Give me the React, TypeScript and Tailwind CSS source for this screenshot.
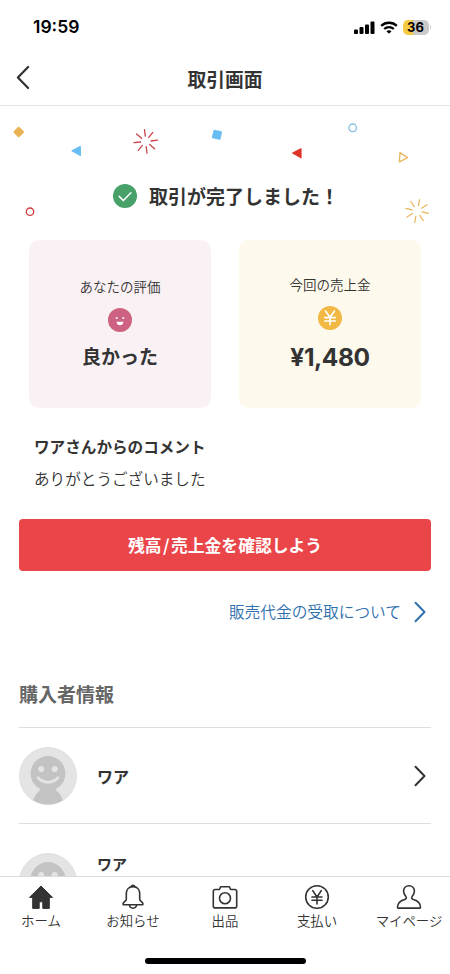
import type { ReactNode } from "react";

const NAV_ITEMS = [
  { id: "home", label: "ホーム", icon: <HomeIcon /> },
  { id: "news", label: "お知らせ", icon: <BellIcon /> },
  { id: "sell", label: "出品", icon: <CameraIcon /> },
  { id: "pay", label: "支払い", icon: <YenIcon /> },
  { id: "mypage", label: "マイページ", icon: <PersonIcon /> },
];

function HomeIcon() {
  return (
    <svg viewBox="0 0 28 28" className="size-7" fill="#333" stroke="#333" strokeWidth="1" strokeLinejoin="round" aria-hidden>
      <path d="M14 3 2.500 14.400h3.200v11h6.500v-6.600h3.600v6.600h6.500v-11h3.200z" />
    </svg>
  );
}

function BellIcon() {
  return (
    <svg viewBox="0 0 28 28" className="size-7" fill="none" stroke="#333" strokeWidth="1.600" strokeLinejoin="round" aria-hidden>
      <path d="M14 3.600c-4.400 0-6.700 3.200-6.700 7.200v5.400c0 1.900-3.300 3-3.300 4.800 0 .5.300.8.800.8h18.400c.5 0 .8-.3.8-.8 0-1.800-3.300-2.900-3.300-4.800v-5.400c0-4-2.300-7.200-6.700-7.200z" />
      <path d="M10.400 21.800c.2 2.200 1.600 3.400 3.600 3.400s3.400-1.200 3.600-3.400" />
      <path d="M12.500 3.400a1.500 1 0 0 1 3 0" fill="#333" />
    </svg>
  );
}

function CameraIcon() {
  return (
    <svg viewBox="0 0 28 28" className="size-7" fill="none" stroke="#333" strokeWidth="1.600" strokeLinejoin="round" aria-hidden>
      <path d="M4.200 6.500h4.200l1.200-2.700h8.800l1.200 2.700h4.200c1.200 0 1.900.8 1.900 1.900v14.500c0 1.200-.8 2-1.900 2H4.200c-1.200 0-1.900-.8-1.900-2V8.400c0-1.100.8-1.900 1.900-1.900z" />
      <circle cx="14" cy="15.300" r="5.500" />
    </svg>
  );
}

function YenIcon() {
  return (
    <svg viewBox="0 0 28 28" className="size-7" fill="none" stroke="#333" strokeWidth="1.600" strokeLinecap="round" aria-hidden>
      <circle cx="14" cy="14" r="11.300" />
      <path d="m9.700 7.600 4.300 6.400 4.300-6.400M14 14v7M9 14h10M9 17.200h10" />
    </svg>
  );
}

function PersonIcon() {
  return (
    <svg viewBox="0 0 28 28" className="size-7" fill="none" stroke="#333" strokeWidth="1.600" strokeLinejoin="round" aria-hidden>
      <path d="M14 2.800c-3.300 0-5.400 2.300-5.400 5.500 0 2.500 1.300 3.900 2.300 5.300.9 1.400.3 2.400-1.300 2.900-4.500 1.300-7.100 3.700-7.100 7.800 0 .5.300.8.800.8h21.400c.5 0 .8-.3.800-.8 0-4.100-2.600-6.500-7.100-7.800-1.600-.5-2.200-1.500-1.300-2.900 1-1.400 2.300-2.800 2.300-5.300 0-3.200-2.100-5.500-5.400-5.500z" />
    </svg>
  );
}

function Chevron({ className }: { className: string }) {
  return (
    <svg
      viewBox="0 0 12 22"
      className={className}
      fill="none"
      stroke="currentColor"
      strokeWidth="2"
      strokeLinecap="round"
      strokeLinejoin="round"
      aria-hidden
    >
      <path d="m1.500 1.800 9 9.200-9 9.200" />
    </svg>
  );
}

function Confetti() {
  return (
    <svg viewBox="0 0 450 134" className="absolute inset-x-0 top-0 h-[134px] w-full" fill="none" strokeLinecap="round" strokeLinejoin="round" aria-hidden>
      <rect x="14.700" y="22" width="8" height="8" rx="1" fill="#ebb155" transform="rotate(45 18.700 26)" />
      <path d="m72 44.800 8.300-4.200v8.800z" fill="#68bdf4" stroke="#68bdf4" strokeWidth="1.200" />
      <rect x="212.600" y="24.400" width="8.800" height="8.800" rx="1" fill="#68bdf4" transform="rotate(13 217 28.800)" />
      <path d="m292.700 47 8.300-4.200v9z" fill="#df3329" stroke="#df3329" strokeWidth="1.200" />
      <circle cx="352.700" cy="21.800" r="3.800" stroke="#82bce0" strokeWidth="1.300" />
      <circle cx="30" cy="105.700" r="3.700" stroke="#cf4147" strokeWidth="1.400" />
      <path d="m400 46.600 7.600 5-8.200 4.200z" stroke="#e7b65a" strokeWidth="1.300" />
      <g stroke="#cb4249" strokeWidth="1.300">
        <path d="m144.500 23.700.8 6.500M152.800 26.400l-4 5M157.500 34.200l-6.500.8M154.600 42.800l-5-4.200M147 47.200l-.8-6.600M138.300 44.400l4-5M134 36.700l6.500-.7M136.600 28l5 4.300" />
      </g>
      <g stroke="#e7b65a" strokeWidth="1.200">
        <path d="m419.500 93.500-1 6.200M427 98.700l-5.500 3.500M428.300 107.300l-6.300-1.400M423.300 114.600l-3.500-5.300M414.700 116.300l1.200-6.200M407 111l5.500-3.400M405.800 102.400l6.300 1.400M410.800 95.500l3.500 5.200" />
      </g>
    </svg>
  );
}

function Avatar() {
  return (
    <svg viewBox="0 0 58 58" className="size-[58px] shrink-0" aria-hidden>
      <clipPath id="avatar-clip">
        <circle cx="29" cy="29" r="28.500" />
      </clipPath>
      <circle cx="29" cy="29" r="28.500" fill="#e5e4e5" stroke="#d8d8d8" strokeWidth="0.700" />
      <g clipPath="url(#avatar-clip)">
        <path d="M20 38c3 3.500 1 5-1 7-2.500 2.500-4 5.500-5 9v6h30v-6c-1-3.500-2.500-6.500-5-9-2-2-4-3.500-1-7z" fill="#c3c3c3" />
        <circle cx="29" cy="26.500" r="17.400" fill="#c3c3c3" />
      </g>
      <circle cx="22.200" cy="22" r="3" fill="#e5e4e5" />
      <circle cx="35.700" cy="22" r="3" fill="#e5e4e5" />
      <path d="M19.200 30.900c4.600 5.700 15 5.700 19.600 0" fill="none" stroke="#e5e4e5" strokeWidth="3" strokeLinecap="round" />
    </svg>
  );
}

function StatusBar() {
  return (
    <div className="flex h-[54px] items-center justify-between pr-[19px] pl-[33px]">
      <span className="pt-px font-['Inter'] text-[17.500px] font-semibold text-black">19:59</span>
      <div className="flex items-center gap-[5px]">
        <svg viewBox="0 0 21 13" className="h-[13px] w-[21px]" aria-hidden>
          <rect x="0" y="8.500" width="4" height="4.500" rx="1" />
          <rect x="5.500" y="6" width="4" height="7" rx="1" />
          <rect x="11" y="3.500" width="4" height="9.500" rx="1" />
          <rect x="16.500" y="0.500" width="4" height="12.500" rx="1" />
        </svg>
        <svg viewBox="0 0 18 13" className="h-[13px] w-[18px]" fill="none" stroke="#000" strokeWidth="2.300" aria-hidden>
          <path d="M1.200 4.900c4.300-4.200 11.300-4.200 15.600 0M4.200 8c2.700-2.500 6.900-2.500 9.600 0" />
          <path d="m9 12.700 2.500-2.500c-1.400-1.200-3.600-1.200-5 0z" fill="#000" stroke="none" />
        </svg>
        <div className="flex items-center gap-px">
          <span className="flex h-[15px] w-[26px] items-center justify-center rounded-[5px] bg-linear-to-r from-[#f6ca45] from-38% to-[#cacaca] to-38% font-['Inter'] text-[13px] leading-none font-bold text-black">
            36
          </span>
          <span className="h-1 w-[1.500px] rounded-r bg-[#cacaca]" />
        </div>
      </div>
    </div>
  );
}

function ResultCard({ className, children }: { className: string; children: ReactNode }) {
  return <div className={`flex h-[168px] flex-1 flex-col items-center rounded-[10px] ${className}`}>{children}</div>;
}

export default function App() {
  return (
    <div className="flex h-[974px] w-[450px] flex-col overflow-hidden bg-white font-['Noto_Sans_CJK_JP',sans-serif] font-[350] text-[#333]">
      <StatusBar />

      <header className="grid h-[52px] shrink-0 grid-cols-[1fr_auto_1fr] items-center border-b-[1.500px] border-[#e4e4e4] px-4">
        <button type="button" aria-label="戻る" className="pb-1">
          <Chevron className="h-[25px] w-[14px] rotate-180" />
        </button>
        <h1 className="pb-px text-[18.800px] leading-none font-bold">取引画面</h1>
      </header>

      <main className="min-h-0 flex-1 overflow-hidden">
        <div className="relative h-[134px] pt-[76px] pl-[113px]">
          <Confetti />
          <div className="flex items-center gap-3">
            <svg viewBox="0 0 24 24" className="size-6" aria-hidden>
              <circle cx="12" cy="12" r="12" fill="#47a169" />
              <path d="m6.200 12.400 4.200 4.200 7.500-7.800" fill="none" stroke="#fff" strokeWidth="1.500" strokeLinecap="round" strokeLinejoin="round" />
            </svg>
            <p className="text-[19px] leading-7 font-bold">取引が完了しました！</p>
          </div>
        </div>

        <div className="flex gap-7 px-[29px]">
          <ResultCard className="bg-[#faf1f5] pt-[35px]">
            <p className="text-[13.500px] leading-[22px]">あなたの評価</p>
            <svg viewBox="0 0 24 24" className="mt-[11px] size-6" aria-hidden>
              <circle cx="12" cy="12" r="12" fill="#cd6283" />
              <circle cx="8.700" cy="9.900" r="1" fill="#fff" />
              <circle cx="15.300" cy="9.900" r="1" fill="#fff" />
              <path d="M8.500 13.700h7c-.2 2.300-1.700 3.600-3.500 3.600s-3.300-1.300-3.500-3.600z" fill="#fff" />
            </svg>
            <p className="mt-[10px] text-[19px] leading-7 font-bold">良かった</p>
          </ResultCard>
          <ResultCard className="bg-[#fdf9ec] pt-[33px]">
            <p className="text-[13.500px] leading-[22px]">今回の売上金</p>
            <svg viewBox="0 0 24 24" className="mt-[11px] size-6" aria-hidden>
              <circle cx="12" cy="12" r="12" fill="#f2b844" />
              <path d="m7.500 5 4.500 6.300L16.500 5M12 11.300v7.500M6.700 11.600h10.600M6.700 15h10.600" fill="none" stroke="#fff" strokeWidth="1.600" strokeLinecap="round" />
            </svg>
            <p className="mt-[13px] font-['Inter'] text-[24.500px] leading-7 font-bold tracking-[-0.4px]">¥1,480</p>
          </ResultCard>
        </div>

        <div className="mt-[26px] pl-[34px] text-[15.600px] leading-6">
          <p className="font-bold">ワアさんからのコメント</p>
          <p className="mt-2">ありがとうございました</p>
        </div>

        <div className="mt-[29px] px-[19px]">
          <button type="button" className="h-[52px] w-full rounded bg-[#ea4649] pt-px text-[16.800px] font-bold text-white">
            残高<span className="mx-[1.500px]">/</span>売上金を確認しよう
          </button>
          <a href="#" className="mt-[29px] flex items-center justify-end gap-[13px] pr-[5px] text-[15.700px] leading-6 text-[#2f70ad]">
            販売代金の受取について
            <Chevron className="h-[22px] w-3" />
          </a>

          <h2 className="mt-14 text-[19px] leading-7 font-bold text-[#666]">購入者情報</h2>
          <div className="mt-[19px] flex h-[97px] items-center border-y border-[#dedede]">
            <Avatar />
            <span className="ml-5 flex-1 text-base font-bold">ワア</span>
            <Chevron className="mr-[5px] h-[22px] w-3" />
          </div>
          <div className="flex items-start pt-[29px]">
            <Avatar />
            <span className="-mt-px ml-5 text-[15px] leading-6 font-bold">ワア</span>
          </div>
        </div>
      </main>

      <nav className="h-[98px] shrink-0 border-t border-[#dadada] bg-white">
        <div className="-mx-[5px] grid grid-cols-5 pt-[6px]">
          {NAV_ITEMS.map((item) => (
            <a key={item.id} href={`#${item.id}`} className="flex flex-col items-center text-[13.400px] leading-5 whitespace-nowrap">
              {item.icon}
              <span className="-mt-px">{item.label}</span>
            </a>
          ))}
        </div>
        <div className="mx-auto mt-7 h-[6px] w-[161px] rounded-full bg-black" />
      </nav>
    </div>
  );
}
